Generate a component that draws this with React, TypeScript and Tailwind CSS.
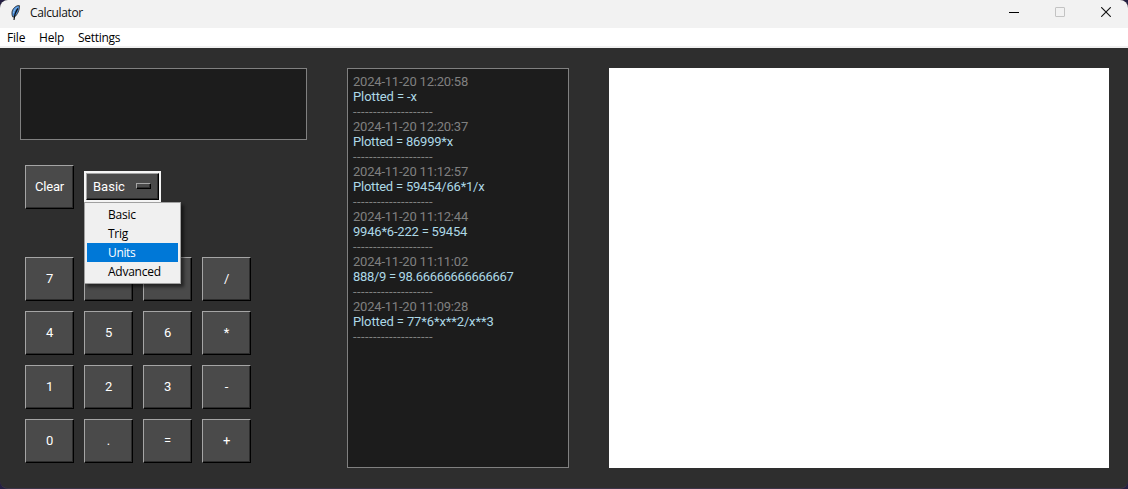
import React from "react";

const ui = "font-['Open_Sans','Noto_Sans',sans-serif]";

const history = [
  { time: "2024-11-20 12:20:58", entry: "Plotted = -x", tracking: "tracking-[-0.1px]" },
  { time: "2024-11-20 12:20:37", entry: "Plotted = 86999*x", tracking: "tracking-[-0.22px]" },
  { time: "2024-11-20 11:12:57", entry: "Plotted = 59454/66*1/x", tracking: "tracking-[-0.22px]" },
  { time: "2024-11-20 11:12:44", entry: "9946*6-222 = 59454", tracking: "tracking-[-0.2px]" },
  { time: "2024-11-20 11:11:02", entry: "888/9 = 98.66666666666667", tracking: "tracking-[-0.32px]" },
  { time: "2024-11-20 11:09:28", entry: "Plotted = 77*6*x**2/x**3", tracking: "tracking-[-0.12px]" },
];

const keys = ["7", "8", "9", "/", "4", "5", "6", "*", "1", "2", "3", "-", "0", ".", "=", "+"];

const modes = ["Basic", "Trig", "Units", "Advanced"];

function Key({ label }: { label: string }) {
  return (
    <button className="h-[44px] w-[49px] border border-t-[#a5a5a5] border-l-[#a5a5a5] border-r-black border-b-black bg-[#4a4a4a] text-center text-[13px] leading-[42px] tracking-[-0.15px] text-white shadow-[inset_-1px_-1px_0_#2c2c2c]">
      {label}
    </button>
  );
}

function Feather() {
  return (
    <svg width="12" height="18" viewBox="0 0 12 18" className="block">
      <path d="M10.4 1.6C7 1.2 3.4 4.6 3 8.2C2.8 10 3 11.4 3.6 12.8L5.6 13C8.4 10.6 10.8 6 10.4 1.6Z" fill="#4589d6" stroke="#333" strokeWidth="0.9" />
      <path d="M8.6 3.2C6.4 4.4 4.6 6.6 4.4 9.4" fill="none" stroke="#8fc0f0" strokeWidth="1" />
      <path d="M8.8 4.4C6.8 7.4 5.4 10 5 16" fill="none" stroke="#111" strokeWidth="1.1" />
    </svg>
  );
}

function TitleBar() {
  return (
    <div className={`flex h-[28px] items-center bg-[#f2f2f2] text-[12px] text-[#111] ${ui}`}>
      <div className="ml-[9px] -mt-[3px] w-[21px]">
        <Feather />
      </div>
      <span className="-mt-[2px] tracking-[-0.37px]">Calculator</span>
      <div className="mr-[17px] ml-auto flex items-center gap-[36px] -mt-[4px]">
        <svg width="10" height="10" viewBox="0 0 10 10">
          <path d="M0 5.5H10" stroke="#000" />
        </svg>
        <svg width="10" height="10" viewBox="0 0 10 10">
          <rect x="0.5" y="0.5" width="9" height="9" rx="0.5" fill="none" stroke="#c3c3c3" />
        </svg>
        <svg width="10" height="10" viewBox="0 0 10 10">
          <path d="M0.2 0.2L9.8 9.8M9.8 0.2L0.2 9.8" stroke="#111" strokeWidth="1.1" />
        </svg>
      </div>
    </div>
  );
}

function MenuBar() {
  return (
    <div className={`flex h-[20px] border-b-2 border-[#f0f0f0] bg-white pl-[7px] text-[12px] leading-[19px] text-black ${ui}`}>
      <span className="w-[32px] tracking-[-0.2px]">File</span>
      <span className="w-[39px] tracking-[-0.2px]">Help</span>
      <span className="tracking-[-0.3px]">Settings</span>
    </div>
  );
}

function ModeMenu() {
  return (
    <div className="relative mt-[6px] h-[31px] w-[77px] border-2 border-[#f5f5f5] bg-[#4a4a4a]">
      <div className="flex h-[27px] w-[73px] items-center border border-t-[#a5a5a5] border-l-[#a5a5a5] border-r-black border-b-black pl-[6px] text-[13px] leading-none text-white shadow-[inset_-1px_-1px_0_#2c2c2c]">
        <span className="w-[43px]">Basic</span>
        <span className="-mt-[1px] h-[6px] w-[15px] border border-t-[#a5a5a5] border-l-[#a5a5a5] border-r-black border-b-black bg-[#4a4a4a] shadow-[inset_-1px_-1px_0_#2c2c2c]" />
      </div>
      <div className={`absolute top-[29px] left-[-2px] z-10 h-[82px] w-[97px] border border-[#a0a0a0] bg-[#f0f0f0] p-[2px] text-[12px] leading-[19px] text-black shadow-[3px_3px_3px_rgba(0,0,0,0.5)] ${ui}`}>
        {modes.map((m) => (
          <div
            key={m}
            className={m === "Units" ? "h-[19px] bg-[#0078d7] pl-[21px] tracking-[-0.35px] text-white" : "h-[19px] pl-[21px] tracking-[-0.25px]"}
          >
            {m}
          </div>
        ))}
      </div>
    </div>
  );
}

export default function App() {
  return (
    <div className="h-[489px] w-[1128px] overflow-hidden bg-[#241f42] font-['Roboto',sans-serif]">
      <div className="h-[489px] overflow-hidden rounded-[8px] border-b border-[#3d3548] bg-[#2e2e2e]">
        <TitleBar />
        <MenuBar />
        <div className="flex items-start pt-[20px] pl-[20px]">
          <div className="w-[327px]">
            <div className="h-[72px] w-[287px] border border-[#808080] bg-[#1c1c1c]" />
            <div className="mt-[25px] flex h-[92px] gap-[10px] pl-[5px]">
              <Key label="Clear" />
              <ModeMenu />
            </div>
            <div className="grid w-[231px] grid-cols-[repeat(4,49px)] gap-[10px] pl-[5px]">
              {keys.map((k) => (
                <Key key={k} label={k} />
              ))}
            </div>
          </div>
          <div className="h-[400px] w-[222px] border border-[#808080] bg-[#1c1c1c] pt-[5px] pl-[5px] text-[13px] leading-[15px] whitespace-nowrap">
            {history.map(({ time, entry, tracking }) => (
              <div key={time}>
                <div className="tracking-[-0.21px] text-[#808080]">{time}</div>
                <div className={`text-[#add8e6] ${tracking}`}>{entry}</div>
                <div className="tracking-[0.41px] text-[#808080]">--------------------</div>
              </div>
            ))}
          </div>
          <div className="ml-[40px] h-[400px] w-[500px] bg-white" />
        </div>
      </div>
    </div>
  );
}
